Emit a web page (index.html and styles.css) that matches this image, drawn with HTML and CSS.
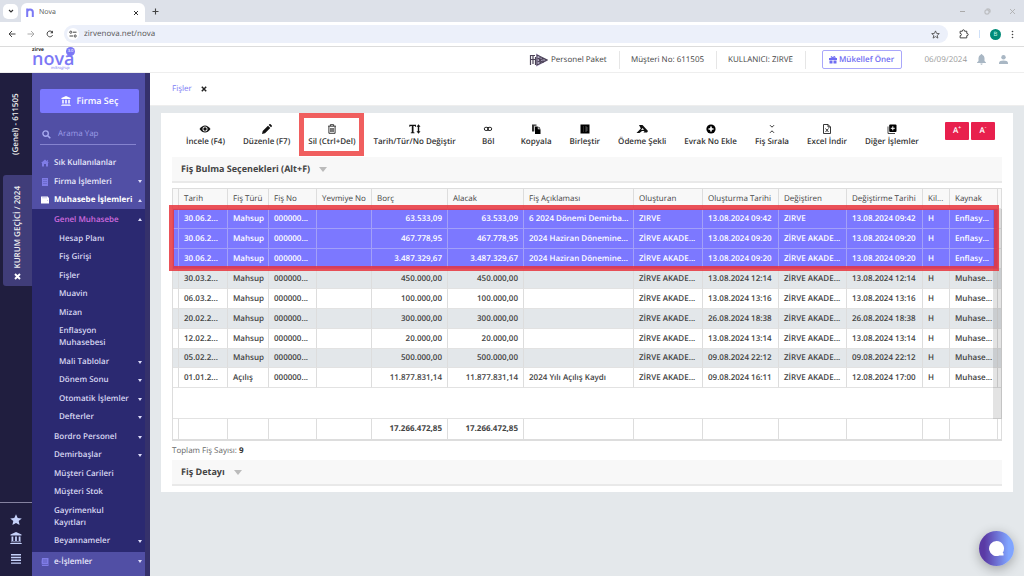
FILE: index.html
```html
<!DOCTYPE html>
<html lang="tr">
<head>
<meta charset="utf-8">
<title>Nova</title>
<link rel="stylesheet" href="styles.css">
</head>
<body>
<div class="browser">
  <div class="tabstrip">
    <button class="tab-search" aria-label="Sekme ara"><svg width="6" height="6" viewBox="0 0 6 6"><path d="M1 2l2 2 2-2" fill="none" stroke="#333" stroke-width="1.1"/></svg></button>
    <div class="tab">
      <svg width="8" height="9" viewBox="0 0 8 9"><path d="M1.200 9V.5M1.200 4Q1.200 1.400 4 1.400T6.800 4V9" fill="none" stroke="#7b78f5" stroke-width="2"/></svg>
      <span class="tab-title">Nova</span>
      <button class="plain" aria-label="Sekmeyi kapat"><svg width="6" height="6" viewBox="0 0 6 6"><path d="M1 1l4 4M5 1l-4 4" stroke="#333" stroke-width="1"/></svg></button>
    </div>
    <button class="plain new-tab" aria-label="Yeni sekme"><svg width="7" height="7" viewBox="0 0 7 7"><path d="M3.5 .5v6M.5 3.5h6" stroke="#444" stroke-width="1.1"/></svg></button>
    <div class="window-buttons">
      <svg width="7" height="7" viewBox="0 0 7 7"><path d="M1 3.5h5" stroke="#aaa"/></svg>
      <svg width="7" height="7" viewBox="0 0 7 7"><rect x="1" y="2" width="4" height="4" rx="1" fill="none" stroke="#aaa" stroke-width=".8"/><path d="M2.5 1h2.5q1 0 1 1v2.500" fill="none" stroke="#aaa" stroke-width=".8"/></svg>
      <svg width="7" height="7" viewBox="0 0 7 7"><path d="M1 1l5 5M6 1l-5 5" stroke="#aaa" stroke-width=".8"/></svg>
    </div>
  </div>
  <div class="addressbar">
    <button class="plain" aria-label="Geri"><svg width="8" height="8" viewBox="0 0 8 8"><path d="M7.500 4H1M4 1L1 4l3 3" fill="none" stroke="#444"/></svg></button>
    <button class="plain" aria-label="İleri"><svg width="8" height="8" viewBox="0 0 8 8"><path d="M.5 4H7M4 1l3 3-3 3" fill="none" stroke="#aaa"/></svg></button>
    <button class="plain" aria-label="Yenile"><svg width="8" height="8" viewBox="0 0 8 8"><path d="M6.600 5.200A2.900 2.900 0 1 1 6.200 2" fill="none" stroke="#444"/><path d="M7 .5V3.300H4.200z" fill="#444"/></svg></button>
    <div class="omnibox">
      <svg width="12" height="12" viewBox="0 0 12 12"><circle cx="6" cy="6" r="6" fill="#fff"/><path d="M6 4.200H9.500M2.500 8H6" stroke="#444"/><circle cx="3.800" cy="4.200" r="1.100" fill="none" stroke="#444" stroke-width=".9"/><circle cx="8.200" cy="8" r="1.100" fill="none" stroke="#444" stroke-width=".9"/></svg>
      <input class="url" aria-label="Adres" value="zirvenova.net/nova">
      <svg width="9" height="9" viewBox="0 0 9 9"><path d="M4.500 .9l1.100 2.500 2.700.2-2.100 1.800.7 2.700-2.400-1.500-2.400 1.500.7-2.700L.7 3.600l2.700-.2z" fill="none" stroke="#444" stroke-width=".8"/></svg>
    </div>
    <div class="browser-tools">
      <svg width="10" height="10" viewBox="0 0 9 9"><path d="M1 2h2q0-1.300 1-1.300T5 2h2v2q1.300 0 1.300 1T7 6v2H1V6q1.200 0 1.200-1T1 4z" fill="none" stroke="#444" stroke-width=".9"/></svg>
      <span class="tool-divider"></span>
      <span class="profile">B</span>
      <svg width="3" height="9" viewBox="0 0 3 9" fill="#444"><circle cx="1.500" cy="1.500" r=".8"/><circle cx="1.500" cy="4.500" r=".8"/><circle cx="1.500" cy="7.500" r=".8"/></svg>
    </div>
  </div>
</div>

<header class="topbar">
  <a class="logo" href="#"><span class="logo-small">zirve</span><span class="logo-name">nova</span><span class="logo-group">mikrogrup</span><span class="logo-version">3.0</span></a>
  <div class="package">
    <svg width="19" height="14" viewBox="0 0 19 14"><path d="M7 0v14l11-6z" fill="#d9d0ec"/><path d="M1.500 12V2M4 11V3M1 2.500h5M1 6.500h6M6.500 12V4M8 2l10 5-10 5zM9 5l4 4M9 9l5-4M11 4v6M14 5v5M16 6v2" fill="none" stroke="#4c4358" stroke-width="1.200"/></svg>
    <span>Personel Paket</span>
  </div>
  <div class="top-cell customer">Müşteri No: 611505</div>
  <div class="top-cell user">KULLANICI: ZIRVE</div>
  <div class="top-cell offer">
    <button class="offer-button"><svg width="8" height="8" viewBox="0 0 8 8"><path d="M0 2h8v2H0zM.5 4.500h3v3h-3zM4.500 4.500h3v3h-3z" fill="#6f6cf2"/><path d="M4 2Q1.500 2 2 .7T4 2Q4.500-.500 6 .7T4 2" fill="none" stroke="#6f6cf2" stroke-width=".9"/></svg>Mükellef Öner</button>
  </div>
  <time class="date">06/09/2024</time>
  <button class="plain" aria-label="Bildirimler"><svg width="9" height="11" viewBox="0 0 9 11"><path d="M4.500 0a.8.8 0 0 1 .8.8Q7.500 1.500 7.500 4v3L9 8.500V9H0v-.5L1.500 7V4q0-2.500 2.200-3.200A.8.8 0 0 1 4.500 0zM3.400 9.500h2.200q-.1 1.300-1.100 1.300t-1.100-1.300z" fill="#a9b7c4"/></svg></button>
  <button class="plain profile-button" aria-label="Profil"><svg width="9" height="9" viewBox="0 0 9 9" fill="#a9b7c4"><circle cx="4.500" cy="2.300" r="2.200"/><path d="M0 9V7.500Q.5 5.500 4.500 5.500T9 7.500V9z"/></svg></button>
</header>

<div class="app">
  <aside class="rail">
    <div class="rail-general">(Genel) - 611505</div>
    <div class="rail-company"><span>KURUM GEÇİCİ / 2024</span><button class="plain" aria-label="Kapat"><svg width="7" height="7" viewBox="0 0 7 7"><path d="M1 1l5 5M6 1L1 6" stroke="#fff" stroke-width="1.900"/></svg></button></div>
    <div class="rail-tools">
      <button class="plain" aria-label="Favoriler"><svg width="12" height="12" viewBox="0 0 12 12"><path d="M6 .3l1.700 3.700 4.100.4-3.100 2.700.9 4L6 9 2.400 11.100l.9-4L.2 4.400 4.300 4z" fill="#c5d1fa"/></svg></button>
      <button class="plain" aria-label="Firmalar"><svg width="12" height="12" viewBox="0 0 12 12" fill="#c5d1fa"><path d="M6 0l5.500 2.500v1H.5v-1zM1.500 4.500h1.800V9H1.500zM5.100 4.500h1.800V9H5.100zM8.700 4.500h1.800V9H8.700zM1 9.500h10v.8H1zM.3 11h11.400v1H.3z"/></svg></button>
      <button class="plain" aria-label="Menü"><svg width="12" height="10" viewBox="0 0 12 10" fill="#c5d1fa"><path d="M1 0h10v1.500H1zM1 2.800h10v1.500H1zM1 5.600h10v1.500H1zM1 8.400h10v1.400H1z"/></svg></button>
    </div>
  </aside>

  <nav class="sidebar">
    <button class="choose"><svg width="10" height="10" viewBox="0 0 12 12" fill="#fff"><path d="M6 0l5.500 2.500v1H.5v-1zM1.500 4.500h1.800V9H1.500zM5.100 4.500h1.800V9H5.100zM8.700 4.500h1.800V9H8.700zM1 9.500h10v.8H1zM.3 11h11.400v1H.3z"/></svg>Firma Seç</button>
    <label class="search"><svg width="9" height="9" viewBox="0 0 9 9"><circle cx="3.600" cy="3.600" r="2.700" fill="none" stroke="#a7aaf0" stroke-width="1.400"/><path d="M5.700 5.700L8.300 8.300" stroke="#a7aaf0" stroke-width="1.600"/></svg><input type="search" placeholder="Arama Yap" aria-label="Arama Yap"></label>
    <ul class="menu">
      <li><a href="#"><svg width="8" height="8" viewBox="0 0 8 8"><path d="M4 .5L0 4h1v3.500h2V5h2v2.500h2V4h1L6.800 2.900V1H6v1.200z" fill="#7f7ce6"/></svg>Sık Kullanılanlar</a></li>
      <li class="has-sub"><a href="#"><svg width="8" height="8" viewBox="0 0 8 8"><path d="M1 0h6v8H1z" fill="#7f7ce6"/><path d="M2.500 1.500h1M4.500 1.500h1M2.500 3.500h1M4.500 3.500h1M2.500 5.500h1M4.500 5.500h1" stroke="#514fa5" stroke-width=".8"/></svg>Firma İşlemleri</a></li>
      <li class="has-sub open current"><a href="#"><svg width="8" height="8" viewBox="0 0 8 8"><path d="M0 .5h7v1h1v6H0z" fill="#fff"/><path d="M1 1.800h5M6 4.500h1" stroke="#aaa8e0" stroke-width=".6"/></svg>Muhasebe İşlemleri</a></li>
    </ul>
    <div class="submenu">
      <a class="sub-title has-sub open" href="#">Genel Muhasebe</a>
      <ul class="sub-list deep">
        <li><a href="#">Hesap Planı</a></li>
        <li><a href="#">Fiş Girişi</a></li>
        <li><a href="#">Fişler</a></li>
        <li><a href="#">Muavin</a></li>
        <li><a href="#">Mizan</a></li>
        <li><a href="#">Enflasyon<br>Muhasebesi</a></li>
        <li class="has-sub"><a href="#">Mali Tablolar</a></li>
        <li class="has-sub"><a href="#">Dönem Sonu</a></li>
        <li class="has-sub"><a href="#">Otomatik İşlemler</a></li>
        <li class="has-sub"><a href="#">Defterler</a></li>
      </ul>
      <ul class="sub-list">
        <li class="has-sub"><a href="#">Bordro Personel</a></li>
        <li class="has-sub"><a href="#">Demirbaşlar</a></li>
        <li><a href="#">Müşteri Carileri</a></li>
        <li><a href="#">Müşteri Stok</a></li>
        <li><a href="#">Gayrimenkul<br>Kayıtları</a></li>
        <li class="has-sub"><a href="#">Beyannameler</a></li>
      </ul>
    </div>
    <ul class="menu last">
      <li class="has-sub"><a href="#"><svg width="8" height="8" viewBox="0 0 8 8"><path d="M1 0h6.500v8H1q-1-4 0-8z" fill="#7f7ce6"/><path d="M2 2h4M2 4h4M1 6.500h6" stroke="#514fa5" stroke-width=".6"/></svg>e-İşlemler</a></li>
    </ul>
  </nav>

  <main class="main">
    <div class="page-tabs"><a href="#">Fişler</a><button class="plain" aria-label="Kapat"><svg width="6" height="6" viewBox="0 0 6 6"><path d="M.8.8l4.400 4.400M5.200.8L.8 5.200" stroke="#222" stroke-width="1.500"/></svg></button></div>
    <section class="card">
      <div class="toolbar">
        <div class="actions">
          <button><svg width="12" height="10" viewBox="0 0 12 10"><path d="M.5 5Q3 1.500 6 1.500T11.500 5Q9 8.500 6 8.500T.5 5z" fill="#111"/><circle cx="6" cy="5" r="2.500" fill="#fff"/><circle cx="6" cy="5" r="1.700" fill="#111"/></svg>İncele (F4)</button>
          <button><svg width="10" height="10" viewBox="0 0 10 10"><path d="M0 10l.7-3L6 1.700l2.300 2.300L3 9.300zM6.700 1L7.600.1q.5-.3 1 .1l1.200 1.200q.4.500 0 1L9 3.300z" fill="#111"/></svg>Düzenle (F7)</button>
          <button class="marked"><svg width="10" height="10" viewBox="0 0 10 10"><path d="M1 2.200h8M3.300 2V.7h3.400V2M1.900 2.500v6.800h6.200V2.500M3.800 4v4M5 4v4M6.200 4v4" fill="none" stroke="#222" stroke-width=".9"/></svg>Sil (Ctrl+Del)</button>
          <button><svg width="12" height="10" viewBox="0 0 12 10"><path d="M.3.800h6.700v2H6.200L5.800 2H4.500v6.200l1 .3v.7h-3.700v-.7l1-.3V2H1.500l-.4.800H.3zM9.500.300l2 2.400h-1.300v4.600h1.300l-2 2.400-2-2.400h1.300V2.700H7.500z" fill="#111"/></svg>Tarih/Tür/No Değiştir</button>
          <button class="short"><svg width="10" height="10" viewBox="0 0 10 10"><g fill="none" stroke="#222"><rect x="1.300" y="3.300" width="4.200" height="3.200" rx="1.600"/><rect x="4.500" y="3.300" width="4.200" height="3.200" rx="1.600"/></g></svg>Böl</button>
          <button><svg width="10" height="10" viewBox="0 0 10 10"><path d="M1 .5h4.500v1.300H3.300v5.700H1z" fill="#333"/><path d="M4 2.500h2.800v2.800H9.500V10H4zM7.500 2.500l2 2h-2z" fill="#000"/></svg>Kopyala</button>
          <button><svg width="10" height="10" viewBox="0 0 10 10"><rect x=".5" y=".5" width="9" height="9" fill="#000"/><path d="M3 3h1M3 5h1M3 7h1M5 3h2v4H5M5 5h2" fill="none" stroke="#888" stroke-width=".6"/></svg>Birleştir</button>
          <button><svg width="12" height="10" viewBox="0 0 12 10"><path d="M3 1h3.500L12 7l-1 1.500H7.500L8.500 7H6L3.500 9H.5L4.800 4.500z" fill="#111"/><path d="M5 6l1.600-2L8 5.800z" fill="#fff"/></svg>Ödeme Şekli</button>
          <button><svg width="10" height="10" viewBox="0 0 10 10"><circle cx="5" cy="5" r="4.600" fill="#000"/><path d="M5 2.500v5M2.500 5h5" stroke="#fff" stroke-width="1.600"/></svg>Evrak No Ekle</button>
          <button><svg width="10" height="10" viewBox="0 0 10 10"><path d="M3 1.200l2 2L7 1.200M3 8.800l2-2 2 2" fill="none" stroke="#333" stroke-width="1"/></svg>Fiş Sırala</button>
          <button><svg width="10" height="10" viewBox="0 0 10 10"><path d="M1.500.500h4.500l2.500 2.500v6.500h-7zM6 .5v2.500h2.500M3.500 4.500l3 3.500M6.500 4.500l-3 3.500" fill="none" stroke="#222" stroke-width=".9"/></svg>Excel İndir</button>
          <button><svg width="10" height="10" viewBox="0 0 10 10"><path d="M1 2.500v7h7" fill="none" stroke="#333" stroke-width=".9"/><rect x="2.200" y=".5" width="7.300" height="7.600" rx="1" fill="#000"/><path d="M5.800 2.300v4M3.800 4.300h4" stroke="#fff"/></svg>Diğer İşlemler</button>
        </div>
        <div class="font-buttons"><button>A<sup>+</sup></button><button>A<sup>-</sup></button></div>
      </div>

      <h2 class="panel">Fiş Bulma Seçenekleri (Alt+F)<span class="chevron"></span></h2>

      <div class="grid">
        <table>
          <colgroup><col class="c-mark"><col class="c-date"><col class="c-kind"><col class="c-no"><col class="c-journal"><col class="c-money"><col class="c-money"><col class="c-desc"><col class="c-creator"><col class="c-money"><col class="c-editor"><col class="c-money"><col class="c-lock"><col class="c-no"><col class="c-end"></colgroup>
          <thead><tr><th></th><th>Tarih</th><th>Fiş Türü</th><th>Fiş No</th><th>Yevmiye No</th><th>Borç</th><th>Alacak</th><th>Fiş Açıklaması</th><th>Oluşturan</th><th>Oluşturma Tarihi</th><th>Değiştiren</th><th>Değiştirme Tarihi</th><th>Kil...</th><th>Kaynak</th><th></th></tr></thead>
          <tbody>
            <tr class="selected"><td></td><td>30.06.2...</td><td>Mahsup</td><td>000000...</td><td></td><td class="num">63.533,09</td><td class="num">63.533,09</td><td>6 2024 Dönemi Demirba...</td><td>ZIRVE</td><td>13.08.2024 09:42</td><td>ZIRVE</td><td>13.08.2024 09:42</td><td>H</td><td>Enflasy...</td><td></td></tr>
            <tr class="selected"><td></td><td>30.06.2...</td><td>Mahsup</td><td>000000...</td><td></td><td class="num">467.778,95</td><td class="num">467.778,95</td><td>2024 Haziran Dönemine...</td><td>ZİRVE AKADE...</td><td>13.08.2024 09:20</td><td>ZİRVE AKADE...</td><td>13.08.2024 09:20</td><td>H</td><td>Enflasy...</td><td></td></tr>
            <tr class="selected"><td></td><td>30.06.2...</td><td>Mahsup</td><td>000000...</td><td></td><td class="num">3.487.329,67</td><td class="num">3.487.329,67</td><td>2024 Haziran Dönemine...</td><td>ZİRVE AKADE...</td><td>13.08.2024 09:20</td><td>ZİRVE AKADE...</td><td>13.08.2024 09:20</td><td>H</td><td>Enflasy...</td><td></td></tr>
            <tr><td></td><td>30.03.2...</td><td>Mahsup</td><td>000000...</td><td></td><td class="num">450.000,00</td><td class="num">450.000,00</td><td></td><td>ZİRVE AKADE...</td><td>13.08.2024 12:14</td><td>ZİRVE AKADE...</td><td>13.08.2024 12:14</td><td>H</td><td>Muhase...</td><td></td></tr>
            <tr><td></td><td>06.03.2...</td><td>Mahsup</td><td>000000...</td><td></td><td class="num">100.000,00</td><td class="num">100.000,00</td><td></td><td>ZİRVE AKADE...</td><td>13.08.2024 13:16</td><td>ZİRVE AKADE...</td><td>13.08.2024 13:16</td><td>H</td><td>Muhase...</td><td></td></tr>
            <tr><td></td><td>20.02.2...</td><td>Mahsup</td><td>000000...</td><td></td><td class="num">300.000,00</td><td class="num">300.000,00</td><td></td><td>ZİRVE AKADE...</td><td>26.08.2024 18:38</td><td>ZİRVE AKADE...</td><td>26.08.2024 18:38</td><td>H</td><td>Muhase...</td><td></td></tr>
            <tr><td></td><td>12.02.2...</td><td>Mahsup</td><td>000000...</td><td></td><td class="num">20.000,00</td><td class="num">20.000,00</td><td></td><td>ZİRVE AKADE...</td><td>13.08.2024 13:14</td><td>ZİRVE AKADE...</td><td>13.08.2024 13:14</td><td>H</td><td>Muhase...</td><td></td></tr>
            <tr><td></td><td>05.02.2...</td><td>Mahsup</td><td>000000...</td><td></td><td class="num">500.000,00</td><td class="num">500.000,00</td><td></td><td>ZİRVE AKADE...</td><td>09.08.2024 22:12</td><td>ZİRVE AKADE...</td><td>09.08.2024 22:12</td><td>H</td><td>Muhase...</td><td></td></tr>
            <tr><td></td><td>01.01.2...</td><td>Açılış</td><td>000000...</td><td></td><td class="num">11.877.831,14</td><td class="num">11.877.831,14</td><td>2024 Yılı Açılış Kaydı</td><td>ZİRVE AKADE...</td><td>09.08.2024 16:11</td><td>ZİRVE AKADE...</td><td>12.08.2024 17:00</td><td>H</td><td>Muhase...</td><td></td></tr>
            <tr class="filler"><td colspan="15"></td></tr>
          </tbody>
          <tfoot><tr><td></td><td></td><td></td><td></td><td></td><td class="num">17.266.472,85</td><td class="num">17.266.472,85</td><td></td><td></td><td></td><td></td><td></td><td></td><td></td><td></td></tr></tfoot>
        </table>
        <div class="scroll-track"></div>
        <div class="row-mark"></div>
      </div>
      <p class="count">Toplam Fiş Sayısı: <b>9</b></p>
      <h2 class="panel">Fiş Detayı<span class="chevron"></span></h2>
    </section>
  </main>
</div>
<button class="chat" aria-label="Sohbet"><svg width="17" height="17" viewBox="0 0 17 17"><path d="M8.500 1a7.500 7.500 0 1 0 3 14.400h4V13.500l-.8-.8A7.500 7.500 0 0 0 8.500 1z" fill="#fff"/></svg></button>
</body>
</html>
```
FILE: styles.css
```css
* { box-sizing: border-box; }
body {
  margin: 0;
  height: 100vh;
  display: flex;
  flex-direction: column;
  overflow: hidden;
  font: 8px/12px "Open Sans", "Noto Sans", sans-serif;
  text-rendering: geometricPrecision;
  color: #444;
  background: #e4e8eb;
}
button, input { font: inherit; color: inherit; text-rendering: inherit; }
button { cursor: pointer; }
a { color: inherit; text-decoration: none; }
ul { list-style: none; margin: 0; padding: 0; }
svg { display: block; flex: none; }
.plain { border: 0; background: none; padding: 0; }

/* Browser frame */
.browser { background: #fff; border-bottom: 1px solid #dcdcdc; }
.tabstrip { display: flex; align-items: center; height: 22px; padding-left: 3px; background: #dde1e9; }
.tab-search { display: flex; align-items: center; justify-content: center; width: 15px; height: 15px; padding: 0; border: 0; border-radius: 5px; background: #fff; }
.tab { display: flex; align-items: center; align-self: flex-end; gap: 5px; width: 124px; height: 19px; margin-left: 3px; padding: 0 6px 0 5px; border-radius: 6px 6px 0 0; background: #fff; }
.tab-title { flex: 1; font-size: 7px; color: #555; }
.new-tab { margin-left: 7px; }
.window-buttons { display: flex; gap: 18px; margin-left: auto; padding-right: 8px; }
.addressbar { display: flex; align-items: center; gap: 11px; height: 24px; padding: 0 10px 0 8px; }
.omnibox { display: flex; align-items: center; flex: 1; gap: 5px; height: 18px; margin-left: -1px; padding: 0 8px 0 3px; border-radius: 9px; background: #ecf0fa; }
.url { flex: 1; min-width: 0; padding: 0; border: 0; outline: 0; background: none; color: #555; }
.browser-tools { display: flex; align-items: center; gap: 10px; }
.tool-divider { width: 1px; height: 8px; background: #cfe0f8; }
.profile { width: 11px; height: 11px; border-radius: 50%; background: #008a77; color: #cfe; font-size: 6px; line-height: 11px; text-align: center; }

/* Application header */
.topbar { display: flex; align-items: center; height: 26px; padding-left: 32px; background: #fff; border-bottom: 1px solid #eee; line-height: 14px; }
.logo { position: relative; display: flex; flex-direction: column; width: 44px; color: #7b78f5; }
.logo-small { height: 4px; font-size: 5px; line-height: 4px; font-weight: 700; color: #222; }
.logo-name { font-size: 18px; line-height: 15px; font-weight: 600; }
.logo-group { padding-left: 19px; font-size: 4px; line-height: 4px; font-style: italic; }
.logo-version { position: absolute; right: 1px; top: -1px; width: 9px; height: 9px; border-radius: 50%; background: #7b78f5; color: #fff; font-size: 4px; line-height: 9px; text-align: center; }
.package { display: flex; align-items: center; gap: 3px; margin-left: auto; padding-right: 12px; }
.top-cell { display: flex; align-items: center; justify-content: center; height: 18px; border-left: 1px solid #e6e6e6; }
.customer { width: 97px; }
.user { width: 89px; }
.offer { padding-left: 16px; }
.offer-button { display: flex; align-items: center; justify-content: center; gap: 2px; width: 80px; height: 19px; padding: 0; border: 1px solid #a9a7fa; border-radius: 2px; background: #fff; color: #6f6cf2; font-weight: 600; }
.date { margin: 0 10px 0 23px; color: #999; }
.profile-button { margin: 0 16px 0 13px; }

/* Left rail */
.app { flex: 1; display: flex; min-height: 0; }
.rail { display: flex; flex-direction: column; width: 32px; background: #201e3f; color: #eee; font-weight: 600; }
.rail-general, .rail-company span { writing-mode: vertical-rl; transform: rotate(180deg); }
.rail-general { height: 102px; width: 32px; line-height: 32px; text-align: center; }
.rail-company { display: flex; flex-direction: column; align-items: center; justify-content: space-between; height: 111px; margin-left: 3px; padding: 11px 0 6px; border-radius: 3px 0 0 3px; background: #403d79; }
.rail-tools { display: flex; flex-direction: column; align-items: center; gap: 6px; margin-top: auto; padding: 11px 1px 12px 0; border-top: 1px solid #8582a0; }
.rail-tools button:last-child { margin-top: 4px; }

/* Sidebar */
.sidebar { display: flex; flex-direction: column; width: 118px; border-right: 5px solid #35316b; background: #514fa5; color: #e8e8fb; font-weight: 600; }
.choose { display: flex; align-items: center; justify-content: center; gap: 6px; height: 24px; margin: 16px 6px 0 8px; border: 0; border-radius: 2px; background: #7b78ff; color: #fff; font-size: 9px; font-weight: 600; }
.search { display: flex; align-items: center; gap: 7px; height: 21px; margin: 11px 9px 8px 8px; padding-left: 2px; border-bottom: 1px solid #8583cf; }
.search input { width: 100%; min-width: 0; padding: 0; border: 0; outline: 0; background: none; font-weight: 400; }
.search input::placeholder { color: #9c9ce8; opacity: 1; }
.menu { padding-left: 9px; }
.menu a { display: flex; align-items: center; gap: 5px; height: 19px; }
.menu .current a { height: 18px; color: #fff; font-weight: 700; }
.menu.last { height: 24px; }
.has-sub { position: relative; }
.has-sub::after { content: ""; position: absolute; right: 3px; top: 8px; border: 2px solid transparent; border-top: 3px solid #dddcf8; border-bottom: 0; }
.has-sub.open::after { border-top: 0; border-bottom: 3px solid #dddcf8; }
.submenu { flex: 1; min-height: 0; overflow: hidden; padding-top: 1px; background: #2b2971; color: #d8d7f2; }
.sub-title { display: block; height: 20px; padding: 4px 0 0 22px; color: #d069df; }
.sub-list { padding-left: 22px; margin-bottom: 1px; }
.sub-list.deep { padding-left: 27px; }
.sub-list li { padding: 3px 0; }
.sub-list li:nth-child(even) { padding-bottom: 4px; }
.sub-list li a { display: block; }

/* Content */
.main { flex: 1; min-width: 0; }
.page-tabs { display: flex; align-items: center; gap: 9px; height: 33px; padding-left: 22px; border-bottom: 1px solid #eee; background: #fff; color: #7b78f5; line-height: 14px; }
.card { margin: 7px 11px 0; padding: 0 11px 6px; background: #fff; }
.toolbar { display: flex; align-items: flex-start; justify-content: space-between; height: 44px; padding: 9px 7px 0 5px; }
.actions { display: flex; }
.actions button { position: relative; display: flex; flex-direction: column; align-items: center; gap: 2px; padding: 2px 9px 0; border: 0; background: none; color: #333; font-weight: 600; white-space: nowrap; }
.actions .short { min-width: 47px; }
.actions .marked::after { content: ""; position: absolute; inset: -9px 0 -8px; border: 5px solid #f05f5f; }
.font-buttons { display: flex; gap: 2px; }
.font-buttons button { width: 24px; height: 18px; padding: 0; border: 0; border-radius: 1px; background: #e8204d; color: #fff; font-weight: 600; }
.font-buttons sup { font-size: 5px; line-height: 1px; }
.panel { display: flex; align-items: center; gap: 9px; height: 26px; margin: 0; padding-left: 9px; border-bottom: 2px solid #e9e9e9; background: #f8f8f8; font-size: 9px; font-weight: 700; color: #444; }
.chevron { border: 4px solid transparent; border-top: 5px solid #bbb; border-bottom: 0; }

.grid { position: relative; margin-top: 5px; }
table { width: 100%; table-layout: fixed; border-collapse: separate; border-spacing: 0; border: 1px solid #ddd; border-bottom-width: 2px; }
.c-mark { width: 6px; }
.c-date { width: 49px; }
.c-kind { width: 41px; }
.c-no { width: 48px; }
.c-journal { width: 55px; }
.c-money { width: 76px; }
.c-desc { width: 110px; }
.c-creator { width: 69px; }
.c-editor { width: 68px; }
.c-lock { width: 27px; }
.c-end { width: 3px; }
th, td { height: 20px; padding: 0 0 0 5px; border-right: 1px solid #ddd; border-bottom: 1px solid #e2e2e2; overflow: hidden; white-space: nowrap; text-align: left; font-weight: 600; }
th { background: #f8f8f8; font-weight: 500; }
th:first-child, td:first-child, th:last-child, td:last-child { padding: 0; }
th:last-child, td:last-child { border-right: 0; }
.num { padding-right: 5px; text-align: right; }
tbody tr:nth-child(8n) td { height: 19px; }
tbody tr:nth-child(even) td { background: #e3e7ea; }
tbody .selected td, tbody .selected:nth-child(even) td { background: #7c78ff; color: #fff; border-color: #a3a0f8; }
tbody .selected td:last-child, tbody .selected:nth-child(even) td:last-child { background: #f6f6f6; border-color: #e2e2e2; }
tbody .filler td, tbody .filler:nth-child(even) td { height: 31px; background: #fff; }
tfoot td { border-bottom: 0; font-weight: 700; }
.scroll-track { position: absolute; top: 21px; right: 0; bottom: 22px; width: 9px; background: rgba(0, 0, 0, .11); }
.row-mark { position: absolute; top: 17px; left: -3px; right: 3px; height: 66px; border: 5px solid rgba(232, 52, 60, .85); }
.count { margin: 4px 0 3px; color: #666; }
.count b { color: #333; }

.chat { position: fixed; right: 10px; bottom: 10px; display: flex; align-items: center; justify-content: center; width: 35px; height: 35px; padding: 0; border: 0; border-radius: 50%; background: linear-gradient(90deg, #5a3aa5 15%, #80a5ff 85%); box-shadow: 0 3px 12px rgba(0, 0, 0, .3); }
```
